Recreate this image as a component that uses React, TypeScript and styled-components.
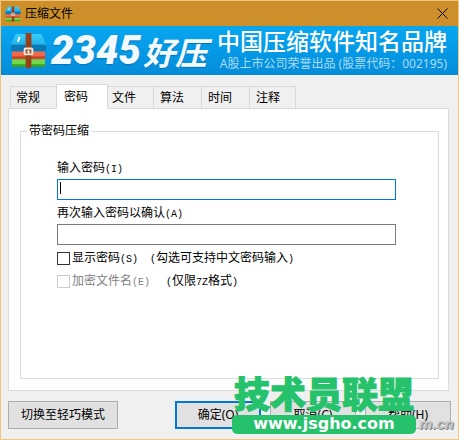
import React, { useId } from 'react';
import styled, { createGlobalStyle } from 'styled-components';

const GlobalStyle = createGlobalStyle`
  *, *::before, *::after { box-sizing: border-box; }
  html, body, #root { height: 100%; }
  body {
    margin: 0;
    font: 12px/16px "Noto Sans", "Noto Sans CJK SC", sans-serif;
    color: #000;
  }
  button, input { font: inherit; color: inherit; }
`;

const Window = styled.main`
  position: relative;
  display: flex;
  flex-direction: column;
  min-height: 100%;
  border: 1px solid #f2c47c;
  background: #f0f0f0;
  overflow: hidden;
`;

const TitleBar = styled.header`
  display: flex;
  align-items: center;
  gap: 4px;
  height: 25px;
  padding: 0 8px 0 4px;
  background: #cc8f2a;
`;

const Title = styled.h1`
  flex: 1;
  margin: 0;
  font-size: 12px;
  font-weight: 400;
`;

const CloseButton = styled.button`
  display: flex;
  padding: 2px;
  border: 0;
  background: none;
`;

const Banner = styled.section`
  display: flex;
  align-items: center;
  height: 49px;
  padding: 0 11px 0 9px;
  background: linear-gradient(#08a6f0, #0597e4 60%, #068cd8);
  color: #fff;
  white-space: nowrap;
`;

const Brand = styled.div`
  display: flex;
  align-items: center;
  gap: 2px;
  flex: 1;
  padding-left: 4px;
  font: italic 900 40px/40px Roboto, sans-serif;
  color: #f2faff;
  text-shadow: 0 1px 1px #0873b8;
`;

const BrandName = styled.span`
  font: italic 700 32px/40px "Noto Sans CJK SC", sans-serif;
`;

const Slogan = styled.div`
  display: flex;
  flex-direction: column;
  align-items: flex-end;
  gap: 2px;
`;

const SloganTitle = styled.strong`
  font: 500 23px/23px "Noto Sans CJK SC", sans-serif;
`;

const SloganNote = styled.span`
  line-height: 19px;
  color: #a9dcf8;
`;

const Tabs = styled.div`
  display: flex;
  align-items: flex-end;
  height: 34px;
  padding: 0 9px;
  z-index: 1;
`;

const Tab = styled.button<{ $active?: boolean }>`
  width: ${(p) => (p.$active ? 52 : 48)}px;
  height: ${(p) => (p.$active ? 25 : 23)}px;
  margin: ${(p) => (p.$active ? '0 -2px' : '0')};
  padding: 0 0 0 ${(p) => (p.$active ? 7 : 6)}px;
  border: 1px solid #d9d9d9;
  border-bottom-color: ${(p) => (p.$active ? '#fff' : '#d9d9d9')};
  border-left-width: ${(p) => (p.$active ? 1 : 0)}px;
  background: ${(p) => (p.$active ? '#fff' : '#f0f0f0')};
  text-align: left;
  z-index: ${(p) => (p.$active ? 1 : 0)};

  &:first-child { border-left-width: 1px; padding-left: 5px; }
  &:last-child { width: 46px; }
`;

const Panel = styled.section`
  flex: 1;
  display: flex;
  margin: -1px 9px 0 7px;
  padding: 14px 9px 11px 11px;
  border: 1px solid #dcdcdc;
  background: #fff;
`;

const Group = styled.fieldset`
  flex: 1;
  min-width: 0;
  margin: 0;
  padding: 21px 42px 0 36px;
  border: 1px solid #dcdcdc;
`;

const Legend = styled.legend`
  margin-left: -30px;
  padding: 0 2px;
`;

const Field = styled.div`
  display: flex;
  flex-direction: column;
  gap: 1px;
  height: 45px;
`;

const FieldLabel = styled.label`
  line-height: 16px;
`;

const InputBox = styled.div`
  position: relative;
  display: flex;
`;

const Caret = styled.span`
  position: absolute;
  left: 3px;
  top: 3px;
  width: 1px;
  height: 12px;
  background: #000;
`;

const PasswordInput = styled.input<{ $focused?: boolean }>`
  width: 100%;
  height: 21px;
  padding: 0 3px;
  border: 1px solid ${(p) => (p.$focused ? '#0078d7' : '#7a7a7a')};
  border-radius: 0;
  background: #fff;
  outline: none;
`;

const Options = styled.div`
  display: grid;
  grid-auto-rows: 23px;
  align-items: start;
  margin-top: 2px;
  line-height: 13px;
`;

const Option = styled.div<{ $gap: number }>`
  display: flex;
  align-items: center;
  gap: ${(p) => p.$gap}px;
  height: 13px;
  white-space: nowrap;
`;

const OptionLabel = styled.label<{ $disabled?: boolean }>`
  display: flex;
  align-items: center;
  gap: 2px;
  color: ${(p) => (p.$disabled ? '#808080' : '#000')};
`;

const Checkbox = styled.input`
  appearance: none;
  width: 13px;
  height: 13px;
  margin: 0;
  border: 1px solid #333;
  background: #fff;

  &:checked { background: #0078d7; }
  &:disabled { border-color: #ccc; }
`;

const Mono = styled.span`
  font-family: "Liberation Mono", monospace;
  font-size: 10px;
`;

const Footer = styled.footer`
  display: flex;
  align-items: center;
  gap: 9px;
  padding: 10px 7px;
`;

const PushButton = styled.button<{ $primary?: boolean; $wide?: boolean }>`
  width: ${(p) => (p.$wide ? 110 : 86)}px;
  height: 28px;
  margin-right: ${(p) => (p.$wide ? 'auto' : '0')};
  padding: 0;
  border: ${(p) => (p.$primary ? '2px solid #0078d7' : '1px solid #adadad')};
  background: #e1e1e1;
`;

const Watermark = styled.div`
  position: absolute;
  right: 42px;
  bottom: 5px;
  width: 184px;
  color: #25c26b;
  text-align: center;
  white-space: nowrap;
`;

const WatermarkName = styled.div`
  font: 900 36px/46px "Noto Sans CJK SC", sans-serif;
  -webkit-text-stroke: 1px #25c26b;
`;

const WatermarkUrl = styled.div`
  height: 19px;
  border-radius: 5px;
  background: #25c26b;
  color: #fff;
  font: 700 16px/18px "DejaVu Sans", sans-serif;
`;

const WatermarkTail = styled.div`
  position: absolute;
  right: 4px;
  bottom: 6px;
  font: italic 700 15px/18px "Liberation Sans", sans-serif;
  color: #c4c4c4;
  text-shadow: 1px 1px 0 #888;
`;

function Archive({ size }: { size: number }) {
  const id = useId();
  return (
    <svg width={size} height={size} viewBox="0 0 38 38" aria-hidden="true">
      <defs>
        <linearGradient id={id} x2="0" y2="1">
          <stop stopColor="#3bcffa" />
          <stop offset="1" stopColor="#129fe0" />
        </linearGradient>
      </defs>
      <path d="M6 2h26l5 10v7H1v-7z" fill={`url(#${id})`} />
      <path d="M1 13h36v5q0 2-2 2H3q-2 0-2-2z" fill="#0b78b6" />
      <path d="M2 20h34v8H2z" fill="#f0694a" />
      <path d="M2 25h34v3H2z" fill="#cf4429" />
      <path d="M2 28h34v8H2z" fill="#6ed848" />
      <path d="M2 33h34v3H2z" fill="#3da423" />
      <path d="M10 5 8 10" stroke="#fff" strokeWidth="2" />
      <path d="M16 1h6v35l-3 2-3-2z" fill="#974119" />
      <rect x="15" y="17" width="8" height="6" rx="1" fill="#a3562f" stroke="#eee4dc" strokeWidth="2" />
      <path d="M19 19v3" stroke="#fff" strokeWidth="2" />
    </svg>
  );
}

const tabs = ['常规', '密码', '文件', '算法', '时间', '注释'];

export default function App() {
  return (
    <>
      <GlobalStyle />
      <Window>
        <TitleBar>
          <Archive size={16} />
          <Title>压缩文件</Title>
          <CloseButton aria-label="关闭">
            <svg width="11" height="11" viewBox="0 0 11 11" stroke="#000">
              <path d="m.5.5 10 10m0-10-10 10" />
            </svg>
          </CloseButton>
        </TitleBar>
        <Banner>
          <Archive size={37} />
          <Brand>
            2345<BrandName>好压</BrandName>
          </Brand>
          <Slogan>
            <SloganTitle>中国压缩软件知名品牌</SloganTitle>
            <SloganNote>A股上市公司荣誉出品 (股票代码：002195)</SloganNote>
          </Slogan>
        </Banner>
        <Tabs role="tablist">
          {tabs.map((name) => (
            <Tab key={name} role="tab" aria-selected={name === '密码'} $active={name === '密码'}>
              {name}
            </Tab>
          ))}
        </Tabs>
        <Panel role="tabpanel">
          <Group>
            <Legend>带密码压缩</Legend>
            <Field>
              <FieldLabel htmlFor="password">输入密码<Mono>(I)</Mono></FieldLabel>
              <InputBox>
                <PasswordInput id="password" type="password" $focused />
                <Caret />
              </InputBox>
            </Field>
            <Field>
              <FieldLabel htmlFor="confirm">再次输入密码以确认<Mono>(A)</Mono></FieldLabel>
              <InputBox>
                <PasswordInput id="confirm" type="password" />
              </InputBox>
            </Field>
            <Options>
              <Option $gap={12}>
                <OptionLabel>
                  <Checkbox type="checkbox" />
                  <span>显示密码<Mono>(S)</Mono></span>
                </OptionLabel>
                <span><Mono>(</Mono>勾选可支持中文密码输入<Mono>)</Mono></span>
              </Option>
              <Option $gap={16}>
                <OptionLabel $disabled>
                  <Checkbox type="checkbox" disabled />
                  <span>加密文件名<Mono>(E)</Mono></span>
                </OptionLabel>
                <span><Mono>(</Mono>仅限<Mono>7Z</Mono>格式<Mono>)</Mono></span>
              </Option>
            </Options>
          </Group>
        </Panel>
        <Footer>
          <PushButton $wide>切换至轻巧模式</PushButton>
          <PushButton $primary>确定(O)</PushButton>
          <PushButton>取消(C)</PushButton>
          <PushButton>帮助(H)</PushButton>
        </Footer>
        <WatermarkTail>m.cn</WatermarkTail>
        <Watermark>
          <WatermarkName>技术员联盟</WatermarkName>
          <WatermarkUrl>www.jsgho.com</WatermarkUrl>
        </Watermark>
      </Window>
    </>
  );
}
